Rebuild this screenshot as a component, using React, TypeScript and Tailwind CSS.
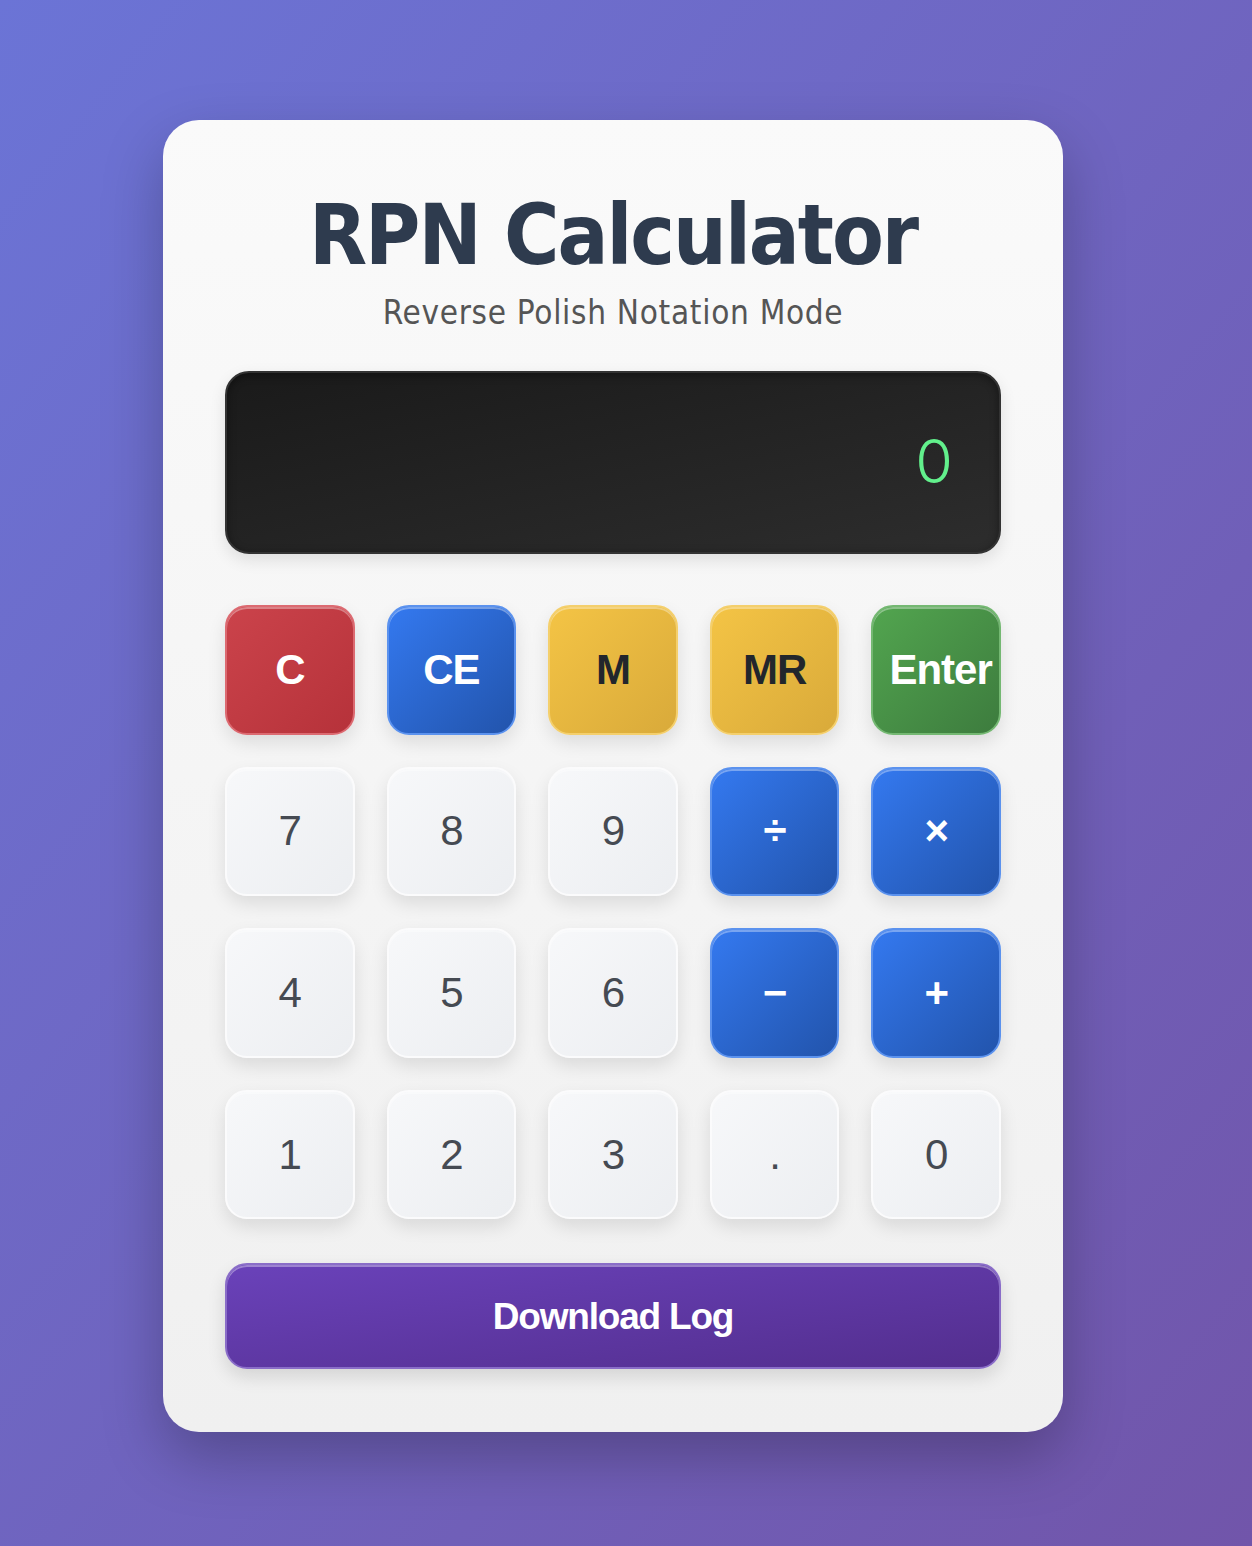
import React from 'react'

type Key = {
  label: string
  kind: 'red' | 'blue' | 'yellow' | 'green' | 'num' | 'op'
}

const keys: Key[] = [
  { label: 'C', kind: 'red' },
  { label: 'CE', kind: 'blue' },
  { label: 'M', kind: 'yellow' },
  { label: 'MR', kind: 'yellow' },
  { label: 'Enter', kind: 'green' },
  { label: '7', kind: 'num' },
  { label: '8', kind: 'num' },
  { label: '9', kind: 'num' },
  { label: '÷', kind: 'op' },
  { label: '×', kind: 'op' },
  { label: '4', kind: 'num' },
  { label: '5', kind: 'num' },
  { label: '6', kind: 'num' },
  { label: '−', kind: 'op' },
  { label: '+', kind: 'op' },
  { label: '1', kind: 'num' },
  { label: '2', kind: 'num' },
  { label: '3', kind: 'num' },
  { label: '.', kind: 'num' },
  { label: '0', kind: 'num' },
]

const styles: Record<Key['kind'], string> = {
  red: 'bg-gradient-to-br from-[#cb434b] to-[#b6323a] border-[#dc6a71] text-white font-bold',
  blue: 'bg-gradient-to-br from-[#3479f0] to-[#2254ac] border-[#5b92ee] text-white font-bold',
  op: 'bg-gradient-to-br from-[#3479f0] to-[#2254ac] border-[#5b92ee] text-white font-bold',
  yellow: 'bg-gradient-to-br from-[#f4c445] to-[#d9aa3a] border-[#f4cf6c] text-[#22262c] font-bold',
  green: 'bg-gradient-to-br from-[#52a54f] to-[#3d7c3e] border-[#74b872] text-white font-bold',
  num: 'bg-gradient-to-br from-[#f7f8fa] to-[#eceef1] border-[#fbfbfc] text-[#454a52] font-normal',
}

function CalcKey({ label, kind }: Key) {
  return (
    <button
      className={`aspect-square w-full rounded-[22px] border-2 px-[16px] text-center text-[42px] leading-none tracking-[-1px] whitespace-nowrap shadow-[inset_0_2px_0_rgba(255,255,255,0.35),0_8px_18px_rgba(0,0,0,0.1)] ${styles[kind]}`}
      style={{ fontFamily: '"Liberation Sans", Arial, sans-serif' }}
    >
      {label}
    </button>
  )
}

export default function App() {
  return (
    <div className="flex min-h-screen bg-gradient-to-br from-[#6b74d6] to-[#7155aa] pt-[120px] pb-[114px] pl-[163px]">
      <div className="w-[900px] rounded-[36px] bg-gradient-to-b from-[#fafafa] to-[#f0f0f0] px-[62px] pt-[67px] pb-[62px] shadow-[0_25px_60px_rgba(0,0,0,0.25)]">
        <div className="text-center" style={{ fontFamily: '"DejaVu Sans Condensed", "DejaVu Sans", sans-serif' }}>
          <h1 className="text-[84px] font-bold leading-[1.16] tracking-[-2px] text-[#2e3b4e]">RPN Calculator</h1>
          <p className="mt-[9px] text-[33px] leading-[1.2] tracking-[0.7px] text-[#555555]">Reverse Polish Notation Mode</p>
        </div>

        <div className="mt-[38px] flex h-[183px] items-center justify-end rounded-[24px] border-2 border-[#333333] bg-gradient-to-br from-[#1a1a1a] to-[#2d2d2d] pr-[46px] pl-[50px] shadow-[inset_0_2px_8px_rgba(0,0,0,0.4),0_6px_16px_rgba(0,0,0,0.1)]">
          <span className="-mt-[3px] text-[61px] font-light leading-none text-[#62f08c]" style={{ fontFamily: 'Inter, sans-serif' }}>
            0
          </span>
        </div>

        <div className="mt-[51px] grid grid-cols-5 gap-8">
          {keys.map((k) => (
            <CalcKey key={k.label} {...k} />
          ))}
        </div>

        <button
          className="mt-[44px] h-[106px] w-full rounded-[22px] border-2 border-[#8a6dc8] bg-gradient-to-br from-[#6a42ba] to-[#532e8e] text-[37px] font-bold tracking-[-1.2px] text-white shadow-[inset_0_2px_0_rgba(255,255,255,0.35),0_8px_18px_rgba(0,0,0,0.12)]"
          style={{ fontFamily: '"Liberation Sans", Arial, sans-serif' }}
        >
          Download Log
        </button>
      </div>
    </div>
  )
}
